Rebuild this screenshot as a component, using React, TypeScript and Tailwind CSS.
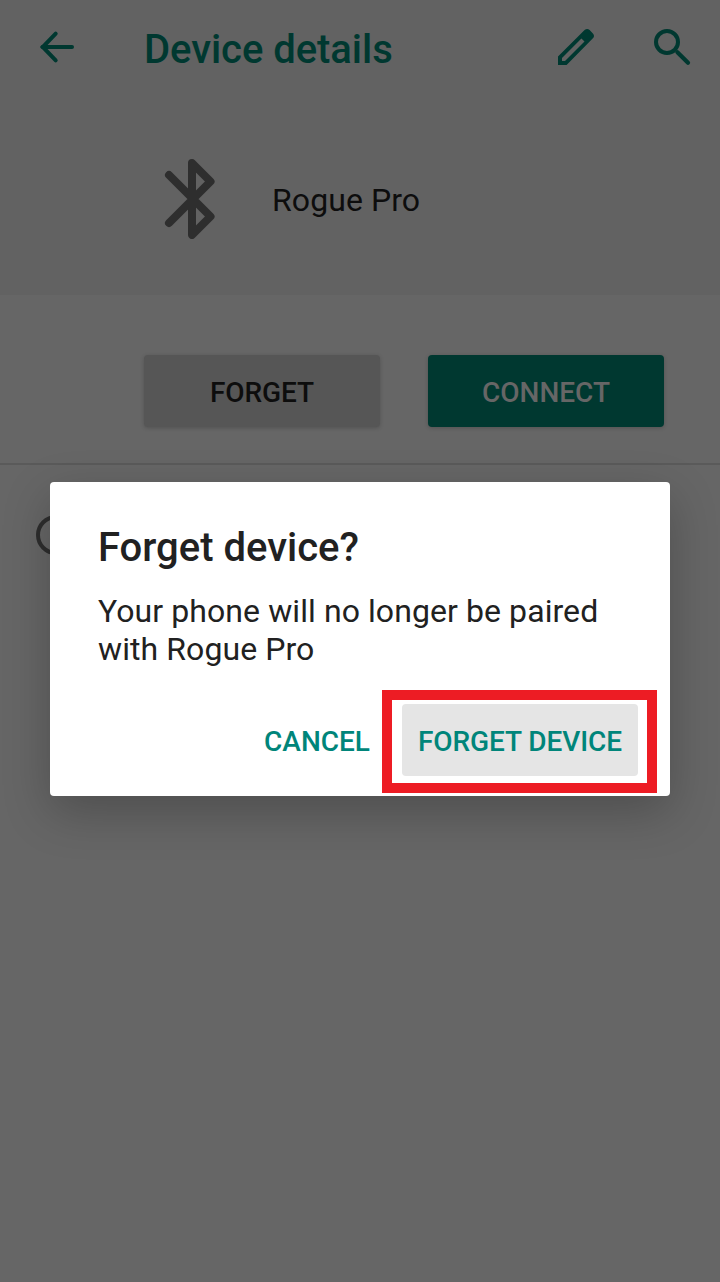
function BackIcon() {
  return (
    <svg className="h-12 w-12" viewBox="0 0 48 48" fill="none" stroke="#003830" strokeWidth="4" strokeLinecap="round">
      <path d="M10.5 24H40" />
      <path d="M23.7 10.7 10.8 24 23.7 37.3" strokeLinejoin="miter" />
    </svg>
  );
}

function PencilIcon() {
  return (
    <svg className="h-12 w-12" viewBox="0 0 48 48" fill="#003830">
      <path
        fillRule="evenodd"
        d="M6 42V33.4L32.6 7.1Q35.2 4.9 37.6 7.1L40.9 10.4Q43.1 12.9 40.9 15.3L14.6 42ZM10 38H13L32.5 18.6 29.4 15.5 10 35Z"
      />
    </svg>
  );
}

function SearchIcon() {
  return (
    <svg className="h-12 w-12" viewBox="0 0 48 48" fill="none" stroke="#003830" strokeWidth="4">
      <circle cx="19" cy="19" r="11" />
      <path d="M29.4 29.2 40 39.8" strokeLinecap="round" strokeWidth="4.2" />
    </svg>
  );
}

function BluetoothIcon() {
  return (
    <svg className="h-[80px] w-[52px]" viewBox="0 0 52 80" fill="none" stroke="#2e2e2e" strokeWidth="8" strokeLinecap="round" strokeLinejoin="round">
      <path d="M5 16 46.5 57.5 28 76V4L46.5 22.5 5 64" />
    </svg>
  );
}

export default function App() {
  return (
    <div className="relative h-[1282px] w-[720px] overflow-hidden bg-[#666666] font-['Roboto',sans-serif] text-[#0d0d0d]">
      <div className="h-[295px] bg-[#626262]">
        <header className="flex h-[98px] items-center pr-6 pl-8">
          <div className="-mt-1">
            <BackIcon />
          </div>
          <h1 className="mt-0.5 ml-16 flex-1 text-[40px] leading-[48px] font-medium tracking-[-0.05px] text-[#003830]">Device details</h1>
          <div className="-mt-1 flex gap-12">
            <PencilIcon />
            <SearchIcon />
          </div>
        </header>
        <div className="flex items-center pt-[61px] pl-[164px]">
          <BluetoothIcon />
          <span className="mt-0.5 ml-14 text-[32px] leading-[38px] tracking-[0.08px]">Rogue Pro</span>
        </div>
      </div>
      <div className="flex h-[170px] gap-12 border-b-2 border-[#5a5a5a] pt-[60px] pl-36">
        <button className="h-[72px] w-[236px] rounded-[4px] bg-[#565656] pt-1 text-[28px] font-medium tracking-[-0.1px] shadow-[0_1px_4px_rgba(0,0,0,0.2)]">FORGET</button>
        <button className="h-[72px] w-[236px] rounded-[4px] bg-[#003830] pt-1 text-[28px] font-medium text-[#666666] shadow-[0_1px_4px_rgba(0,0,0,0.2)]">CONNECT</button>
      </div>
      <div className="pt-[50px] pl-9">
        <div className="h-10 w-10 rounded-full border-4 border-[#2e2e2e]" />
      </div>

      <div role="dialog" className="absolute top-[482px] left-[50px] h-[314px] w-[620px] rounded-[4px] bg-white px-12 pt-[42px] text-[#212121] shadow-[0_16px_48px_rgba(0,0,0,0.24)]">
        <h2 className="text-[40px] leading-[48px] font-medium">Forget device?</h2>
        <p className="mt-5 text-[32px] leading-[38px] tracking-[0.08px]">
          Your phone will no longer be paired
          <br />
          with Rogue Pro
        </p>
        <div className="-mr-4 mt-[36px] flex h-[72px] justify-end text-[28px] font-medium text-[#00857a]">
          <button className="mr-4 w-[138px] pt-1 whitespace-nowrap">CANCEL</button>
          <button className="w-[236px] rounded-[4px] bg-[#e5e5e5] pt-1 tracking-[-0.08px] whitespace-nowrap">FORGET DEVICE</button>
        </div>
        <div className="pointer-events-none absolute top-[208px] left-[332px] h-[103px] w-[275px] border-10 border-[#ed1c24]" />
      </div>
    </div>
  );
}
